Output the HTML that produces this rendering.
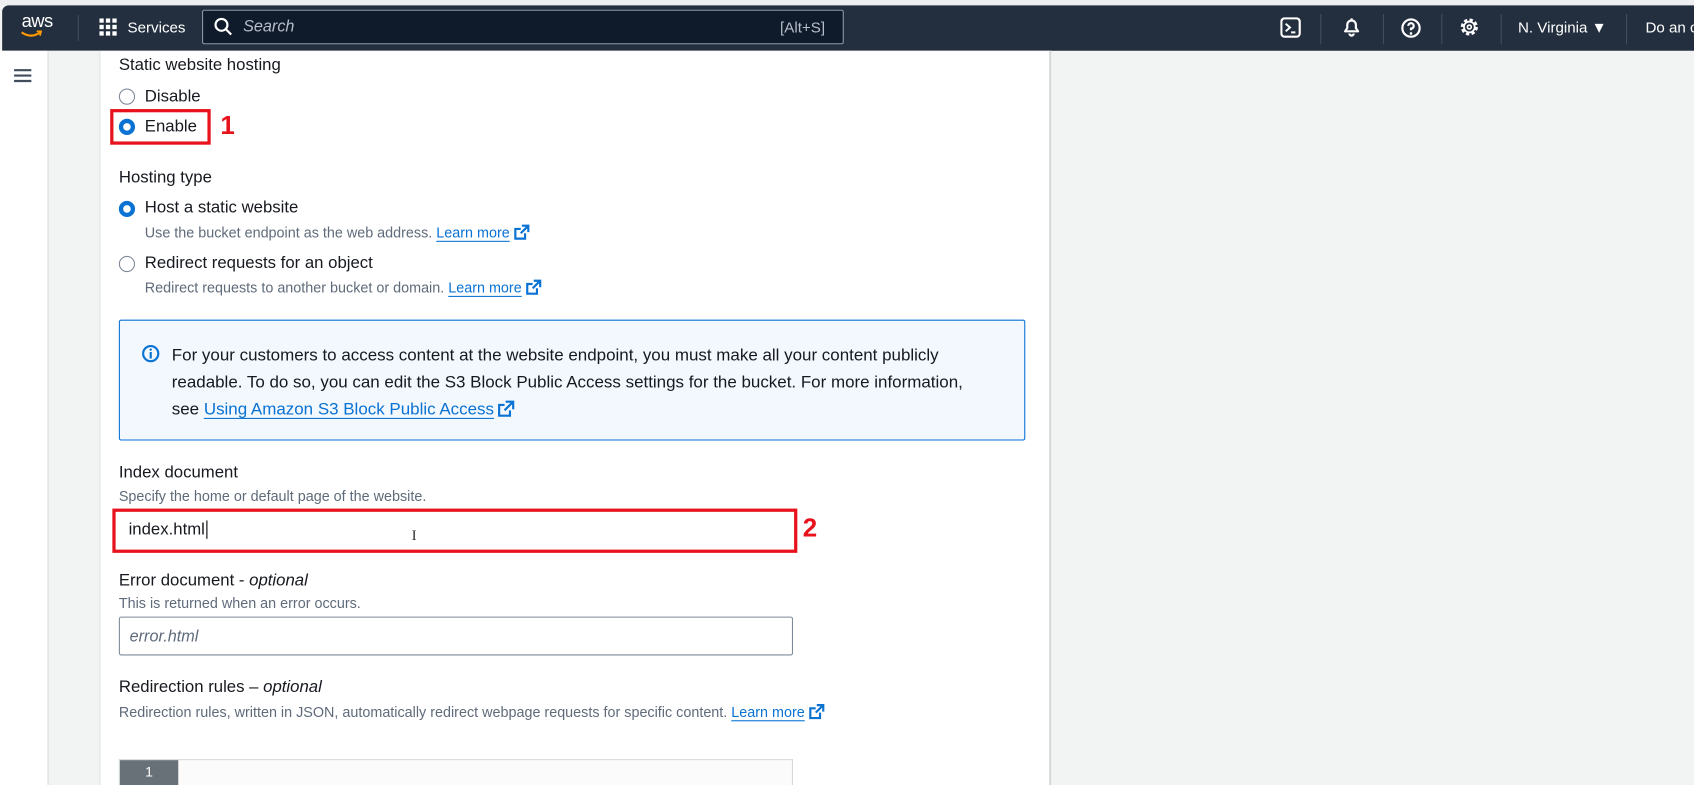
<!DOCTYPE html>
<html><head><meta charset="utf-8"><style>
html,body{margin:0;padding:0;width:1694px;height:785px;overflow:hidden;background:#f2f3f3}
#w{position:absolute;left:0;top:0;width:1568px;height:727px;transform:scale(1.0804,1.0798);transform-origin:0 0;font-family:"Liberation Sans",sans-serif;color:#16191f;background:#f2f3f3}
.a{position:absolute}
.t{font-size:15.5px;white-space:nowrap}
.d{font-size:13.3px;color:#5f6b7a;white-space:nowrap}
.lnk{color:#0972d3;text-decoration:underline;text-underline-offset:3px}
.ext{display:inline-block;vertical-align:-3px;margin-left:3px}
.rad{position:absolute;border:1.5px solid #7d8998;border-radius:50%;background:#fff;box-sizing:border-box;width:15px;height:15px}
.rad.on{border:4.5px solid #0972d3}
</style></head><body><div id="w">
<div class="a" style="left:0;top:0;width:1568px;height:5px;background:#eceef0"></div>
<div class="a" style="left:2px;top:5px;width:1566px;height:42px;background:#232f3e;border-radius:6px 0 0 0"></div>
<div class="a" style="left:20px;top:10px;color:#fff;font-size:17px;letter-spacing:-0.5px">aws</div>
<svg class="a" style="left:18px;top:27px" width="22" height="10"><path d="M2 3 Q11 9 19 3" stroke="#ff9900" stroke-width="2" fill="none"/><path d="M16 2 L20 2 L19 6" stroke="#ff9900" stroke-width="1.6" fill="none"/></svg>
<div class="a" style="left:72px;top:14px;width:1px;height:24px;background:#414d5c"></div>
<svg class="a" style="left:92px;top:17px" width="18" height="18" fill="#fff"><rect x="0" y="0" width="4" height="4"/><rect x="6" y="0" width="4" height="4"/><rect x="12" y="0" width="4" height="4"/><rect x="0" y="6" width="4" height="4"/><rect x="6" y="6" width="4" height="4"/><rect x="12" y="6" width="4" height="4"/><rect x="0" y="12" width="4" height="4"/><rect x="6" y="12" width="4" height="4"/><rect x="12" y="12" width="4" height="4"/></svg>
<div class="a" style="left:118px;top:17px;color:#fff;font-size:14px">Services</div>
<div class="a" style="left:187px;top:9px;width:594px;height:32px;border:1px solid #8d99a8;border-radius:2px;background:#0f1b2a;box-sizing:border-box"></div>
<svg class="a" style="left:198px;top:16px" width="18" height="18"><circle cx="7" cy="7" r="5.5" stroke="#fff" stroke-width="2" fill="none"/><path d="M11 11 L16 16" stroke="#fff" stroke-width="2"/></svg>
<div class="a" style="left:225px;top:16px;color:#b6bec9;font-size:15px;font-style:italic">Search</div>
<div class="a" style="left:722px;top:17px;color:#b6bec9;font-size:14px">[Alt+S]</div>
<svg class="a" style="left:1185px;top:16px" width="20" height="20"><rect x="1" y="1" width="17" height="17" rx="3" stroke="#fff" stroke-width="2" fill="none"/><path d="M5 6 L9 9.5 L5 13 M10 14 H14" stroke="#fff" stroke-width="1.8" fill="none"/></svg>
<div class="a" style="left:1222px;top:13px;width:1px;height:28px;background:#414d5c"></div>
<svg class="a" style="left:1241px;top:15px" width="20" height="20"><path d="M4 14 H16 L14 11 V8 A4 4 0 0 0 6 8 V11 Z" stroke="#fff" stroke-width="2" fill="none" stroke-linejoin="round"/><path d="M8 16 A2 2 0 0 0 12 16" stroke="#fff" stroke-width="2" fill="none"/><path d="M10 2 V4" stroke="#fff" stroke-width="2"/></svg>
<div class="a" style="left:1280px;top:13px;width:1px;height:28px;background:#414d5c"></div>
<svg class="a" style="left:1296px;top:16px" width="20" height="20"><circle cx="10" cy="10" r="8" stroke="#fff" stroke-width="2" fill="none"/><path d="M7.5 8 A2.5 2.5 0 1 1 10 10.5 V12" stroke="#fff" stroke-width="2" fill="none"/><circle cx="10" cy="15" r="1.2" fill="#fff"/></svg>
<div class="a" style="left:1334px;top:13px;width:1px;height:28px;background:#414d5c"></div>
<svg class="a" style="left:1350px;top:15px" width="20" height="20"><circle cx="10" cy="10" r="6.5" stroke="#fff" stroke-width="2.8" fill="none" stroke-dasharray="3 2.1"/><circle cx="10" cy="10" r="5" stroke="#fff" stroke-width="1.6" fill="none"/><circle cx="10" cy="10" r="1.8" stroke="#fff" stroke-width="1.5" fill="none"/></svg>
<div class="a" style="left:1389px;top:13px;width:1px;height:28px;background:#414d5c"></div>
<div class="a" style="left:1405px;top:17px;color:#fff;font-size:14px">N. Virginia &#9660;</div>
<div class="a" style="left:1505px;top:13px;width:1px;height:28px;background:#414d5c"></div>
<div class="a" style="left:1523px;top:17px;color:#fff;font-size:14px;white-space:nowrap">Do an c</div>

<div class="a" style="left:0;top:47px;width:44px;height:680px;background:#fff;border-right:1px solid #d5dbdb"></div>
<svg class="a" style="left:12px;top:63px" width="18" height="14"><path d="M1 2 H17 M1 7 H17 M1 12 H17" stroke="#414d5c" stroke-width="2"/></svg>
<div class="a" style="left:45px;top:47px;width:47px;height:680px;background:#f2f3f3;border-right:1px solid #e1e4e8"></div>
<div class="a" style="left:93px;top:47px;width:878px;height:680px;background:#fff;border-right:2px solid #d5dbdb"></div>

<div class="a t" style="left:110px;top:52px">Static website hosting</div>
<div class="rad" style="left:110px;top:82px"></div>
<div class="a t" style="left:134px;top:81px">Disable</div>
<div class="rad on" style="left:110px;top:110px"></div>
<div class="a t" style="left:134px;top:109px">Enable</div>
<div class="a" style="left:102px;top:101px;width:93px;height:33px;border:3px solid #e8121d;box-sizing:border-box"></div>
<div class="a" style="left:204px;top:103px;color:#e8121d;font-size:24px;font-weight:bold">1</div>

<div class="a t" style="left:110px;top:156px">Hosting type</div>
<div class="rad on" style="left:110px;top:186px"></div>
<div class="a t" style="left:134px;top:184px">Host a static website</div>
<div class="a d" style="left:134px;top:207px">Use the bucket endpoint as the web address. <span class="lnk">Learn more</span><svg class="ext" width="16" height="16"><path d="M8 2 H14 V8 M14 2 L7 9 M11 9 V14 H2 V5 H7" stroke="#0972d3" stroke-width="2" fill="none"/></svg></div>
<div class="rad" style="left:110px;top:237px"></div>
<div class="a t" style="left:134px;top:235px">Redirect requests for an object</div>
<div class="a d" style="left:134px;top:258px">Redirect requests to another bucket or domain. <span class="lnk">Learn more</span><svg class="ext" width="16" height="16"><path d="M8 2 H14 V8 M14 2 L7 9 M11 9 V14 H2 V5 H7" stroke="#0972d3" stroke-width="2" fill="none"/></svg></div>

<div class="a" style="left:110px;top:296px;width:839px;height:112px;background:#f2f8fd;border:1px solid #0972d3;border-radius:2px;box-sizing:border-box"></div>
<svg class="a" style="left:131px;top:319px" width="17" height="17"><circle cx="8.5" cy="8.5" r="7" stroke="#0972d3" stroke-width="2" fill="none"/><path d="M8.5 7 V13" stroke="#0972d3" stroke-width="2"/><circle cx="8.5" cy="4.8" r="1.1" fill="#0972d3"/></svg>
<div class="a" style="left:159px;top:317px;font-size:15.7px;line-height:25px;white-space:nowrap">For your customers to access content at the website endpoint, you must make all your content publicly<br>readable. To do so, you can edit the S3 Block Public Access settings for the bucket. For more information,<br>see <span class="lnk">Using Amazon S3 Block Public Access</span><svg class="ext" width="17" height="17"><path d="M8 2 H15 V9 M15 2 L7 10 M12 10 V15 H2 V5 H7" stroke="#0972d3" stroke-width="2" fill="none"/></svg></div>

<div class="a t" style="left:110px;top:429px">Index document</div>
<div class="a d" style="left:110px;top:452px">Specify the home or default page of the website.</div>
<div class="a" style="left:104px;top:471px;width:634px;height:41px;border:3px solid #e8121d;box-sizing:border-box;background:#fff"></div>
<div class="a t" style="left:119px;top:482px">index.html<span style="border-left:1px solid #000;margin-left:1px"></span></div>
<div class="a" style="left:381px;top:489px;font-size:14px;color:#333;font-family:'Liberation Serif',serif">I</div>
<div class="a" style="left:743px;top:476px;color:#e8121d;font-size:24px;font-weight:bold">2</div>

<div class="a t" style="left:110px;top:529px">Error document - <i>optional</i></div>
<div class="a d" style="left:110px;top:551px">This is returned when an error occurs.</div>
<div class="a" style="left:110px;top:571px;width:624px;height:36px;border:1px solid #7d8998;border-radius:2px;box-sizing:border-box;background:#fff"></div>
<div class="a" style="left:120px;top:581px;font-size:15px;font-style:italic;color:#5f6b7a">error.html</div>

<div class="a t" style="left:110px;top:628px">Redirection rules – <i>optional</i></div>
<div class="a d" style="left:110px;top:651px">Redirection rules, written in JSON, automatically redirect webpage requests for specific content. <span class="lnk">Learn more</span><svg class="ext" width="16" height="16"><path d="M8 2 H14 V8 M14 2 L7 9 M11 9 V14 H2 V5 H7" stroke="#0972d3" stroke-width="2" fill="none"/></svg></div>
<div class="a" style="left:110px;top:703px;width:624px;height:24px;background:#fbfbfb;border:1px solid #d5dbdb;border-bottom:none;box-sizing:border-box"></div>
<div class="a" style="left:111px;top:704px;width:54px;height:23px;background:#687078;color:#fff;font-size:13px;text-align:center;line-height:22px">1</div>
</div></body></html>
